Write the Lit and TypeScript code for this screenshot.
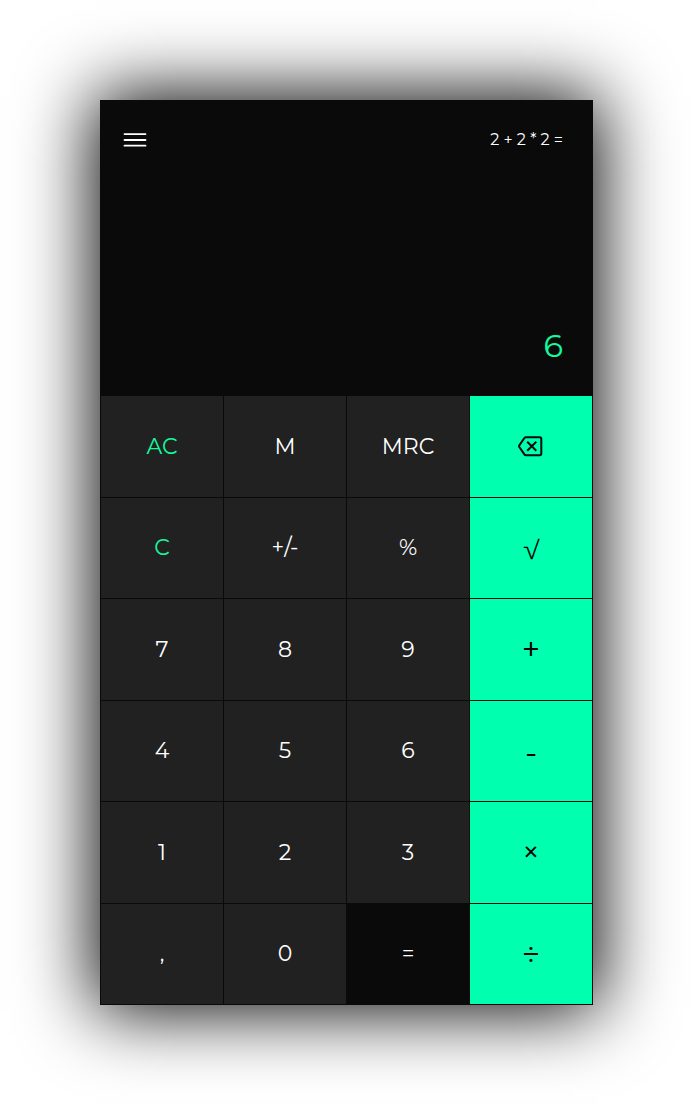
import { LitElement, html, css, svg } from "lit";
import { customElement } from "lit/decorators.js";
import { classMap } from "lit/directives/class-map.js";

interface Key { label: string; kind: string }

const k = (label: string, kind = ""): Key => ({ label, kind });

const KEYS: Key[] = [
  k("AC", "accent"), k("M"), k("MRC"), k("back", "op"),
  k("C", "accent"), k("+/-"), k("%"), k("√", "op root"),
  k("7"), k("8"), k("9"), k("+", "op sign raised"),
  k("4"), k("5"), k("6"), k("-", "op sign lowered"),
  k("1"), k("2"), k("3"), k("×", "op sign raised"),
  k(","), k("0"), k("=", "equals"), k("÷", "op sign divide"),
];

const backspace = html`<svg class="back" width="28" height="28" viewBox="0 0 28 28">${svg`
  <path d="M8.9 5.2H22.7a1.6 1.6 0 0 1 1.6 1.6v14.8a1.6 1.6 0 0 1-1.6 1.6H8.9a1.8 1.8 0 0 1-1.5-.8L2.3 15a1.4 1.4 0 0 1 0-1.6L7.4 6a1.8 1.8 0 0 1 1.5-.8Z"/>
  <path stroke-linecap="butt" d="M10.2 9.7l9.1 9.1M19.3 9.7l-9.1 9.1"/>`}</svg>`;

@customElement("app-root")
export class AppRoot extends LitElement {
  static styles = css`
    :host { display: block; box-sizing: border-box; height: 1105px; padding: 100px; background: #fff; overflow: hidden;
      font-family: Montserrat, sans-serif; }
    .calc { width: 493px; height: 905px; background: #0a0a0a; box-shadow: 0 0 70px 5px #000; }
    .display { box-sizing: border-box; height: 295px; padding: 28px 30px 27px 23px; display: flex; flex-direction: column; justify-content: space-between; }
    .top { display: flex; justify-content: space-between; height: 24px; }
    .menu { display: block; }
    .expr { color: #fff; font-size: 16px; line-height: 24px; white-space: pre; }
    .result { color: #14f99b; font-size: 32px; line-height: 44px; text-align: right; }
    .keys { display: grid; grid-template-columns: repeat(4, 122px); grid-template-rows: 101px 100px 101px 100px 101px 100px; gap: 1px; padding: 1px; }
    .key { border: 0; padding: 0 0 1px; margin: 0; background: #212121; color: #fff; font: 400 22px Montserrat, sans-serif; display: flex; align-items: center; justify-content: center; }
    .accent { color: #14f99b; }
    .op { background: #00ffae; color: #000; }
    .sign { font-size: 32px; }
    .raised { padding-bottom: 2px; }
    .lowered { padding: 2px 0 0; }
    .divide { padding: 0; }
    .equals { background: #0a0a0a; }
    .back { fill: none; stroke: #0a0a0a; stroke-width: 2; stroke-linejoin: round; }
  `;

  render() {
    return html`<div class="calc">
      <div class="display">
        <div class="top">
          <svg class="menu" width="24" height="24" viewBox="0 0 24 24" stroke="#fff" stroke-width="1.8" stroke-linecap="round"><path d="M1.5 6.1h21M1.5 12h21M1.5 17.7h21"/></svg>
          <div class="expr">2 + 2 * 2 =</div>
        </div>
        <div class="result">6</div>
      </div>
      <div class="keys">${KEYS.map((key) => html`<button class=${classMap({ key: true, ...Object.fromEntries(key.kind.split(" ").filter(Boolean).map((c) => [c, true])) })}>${key.label === "back" ? backspace : html`<span>${key.label}</span>`}</button>`)}</div>
    </div>`;
  }
}
